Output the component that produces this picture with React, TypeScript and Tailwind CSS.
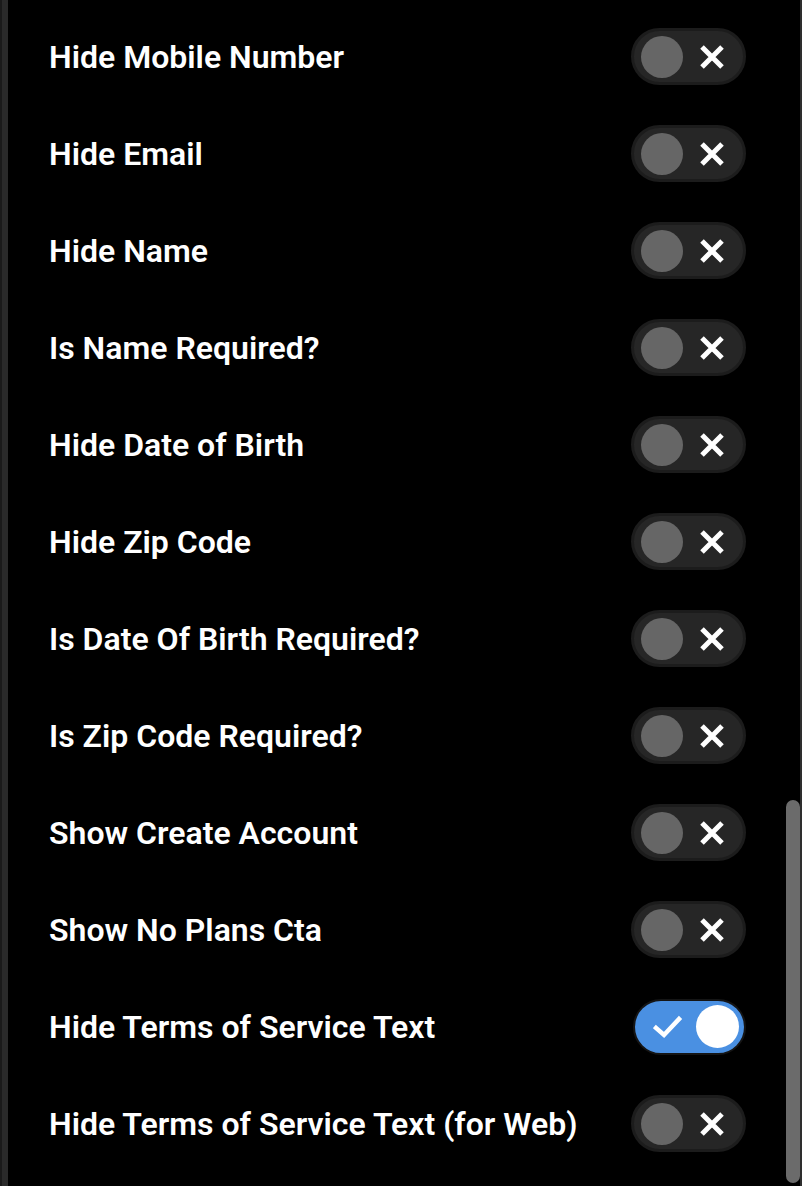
import React from "react";

const settings: { label: string; on: boolean }[] = [
  { label: "Hide Mobile Number", on: false },
  { label: "Hide Email", on: false },
  { label: "Hide Name", on: false },
  { label: "Is Name Required?", on: false },
  { label: "Hide Date of Birth", on: false },
  { label: "Hide Zip Code", on: false },
  { label: "Is Date Of Birth Required?", on: false },
  { label: "Is Zip Code Required?", on: false },
  { label: "Show Create Account", on: false },
  { label: "Show No Plans Cta", on: false },
  { label: "Hide Terms of Service Text", on: true },
  { label: "Hide Terms of Service Text (for Web)", on: false },
];

const Toggle = ({ on }: { on: boolean }) => {
  if (on) {
    return (
      <div className="flex h-[56px] w-[113px] items-center justify-between rounded-full border-[2px] border-[#151515] bg-[#4a90e2] pl-[18px] pr-[5px]">
        <svg width="30" height="26" viewBox="0 0 30 26" fill="none">
          <path d="M3 14 L11 21 L26 5" stroke="#fff" strokeWidth="4.5" strokeLinecap="square" />
        </svg>
        <div className="h-[43px] w-[43px] rounded-full bg-white" />
      </div>
    );
  }
  return (
    <div className="flex h-[57px] w-[115px] items-center rounded-full border-[3px] border-[#1c1c1c] bg-[#262626] pl-[7px]">
      <div className="h-[42px] w-[42px] rounded-full bg-[#666666]" />
      <svg className="ml-[16px]" width="26" height="24" viewBox="0 0 26 24" fill="none">
        <path d="M3 2 L23 22 M23 2 L3 22" stroke="#fff" strokeWidth="5" />
      </svg>
    </div>
  );
};

export default function App() {
  return (
    <div className="relative flex h-[1186px] w-[802px] overflow-hidden bg-black font-['Roboto',sans-serif]">
      {/* left edge */}
      <div className="flex h-full w-[8px]">
        <div className="h-full w-[2px] bg-[#1a1a1a]" />
        <div className="h-full w-[6px] bg-[#2a2a2a]" />
      </div>

      <div className="flex-1 pt-[8px] pl-[41px] pr-[54px]">
        {settings.map((s) => (
          <div key={s.label} className="flex h-[97px] items-center justify-between">
            <span className="text-[32px] font-semibold leading-none text-white">{s.label}</span>
            <Toggle on={s.on} />
          </div>
        ))}
      </div>

      {/* right edge + scrollbar */}
      <div className="h-full w-[2px] bg-[#2e2e2e]" />
      <div className="absolute right-[2px] top-[800px] h-[383px] w-[14px] rounded-full bg-[#6b6b6b]" />
    </div>
  );
}
